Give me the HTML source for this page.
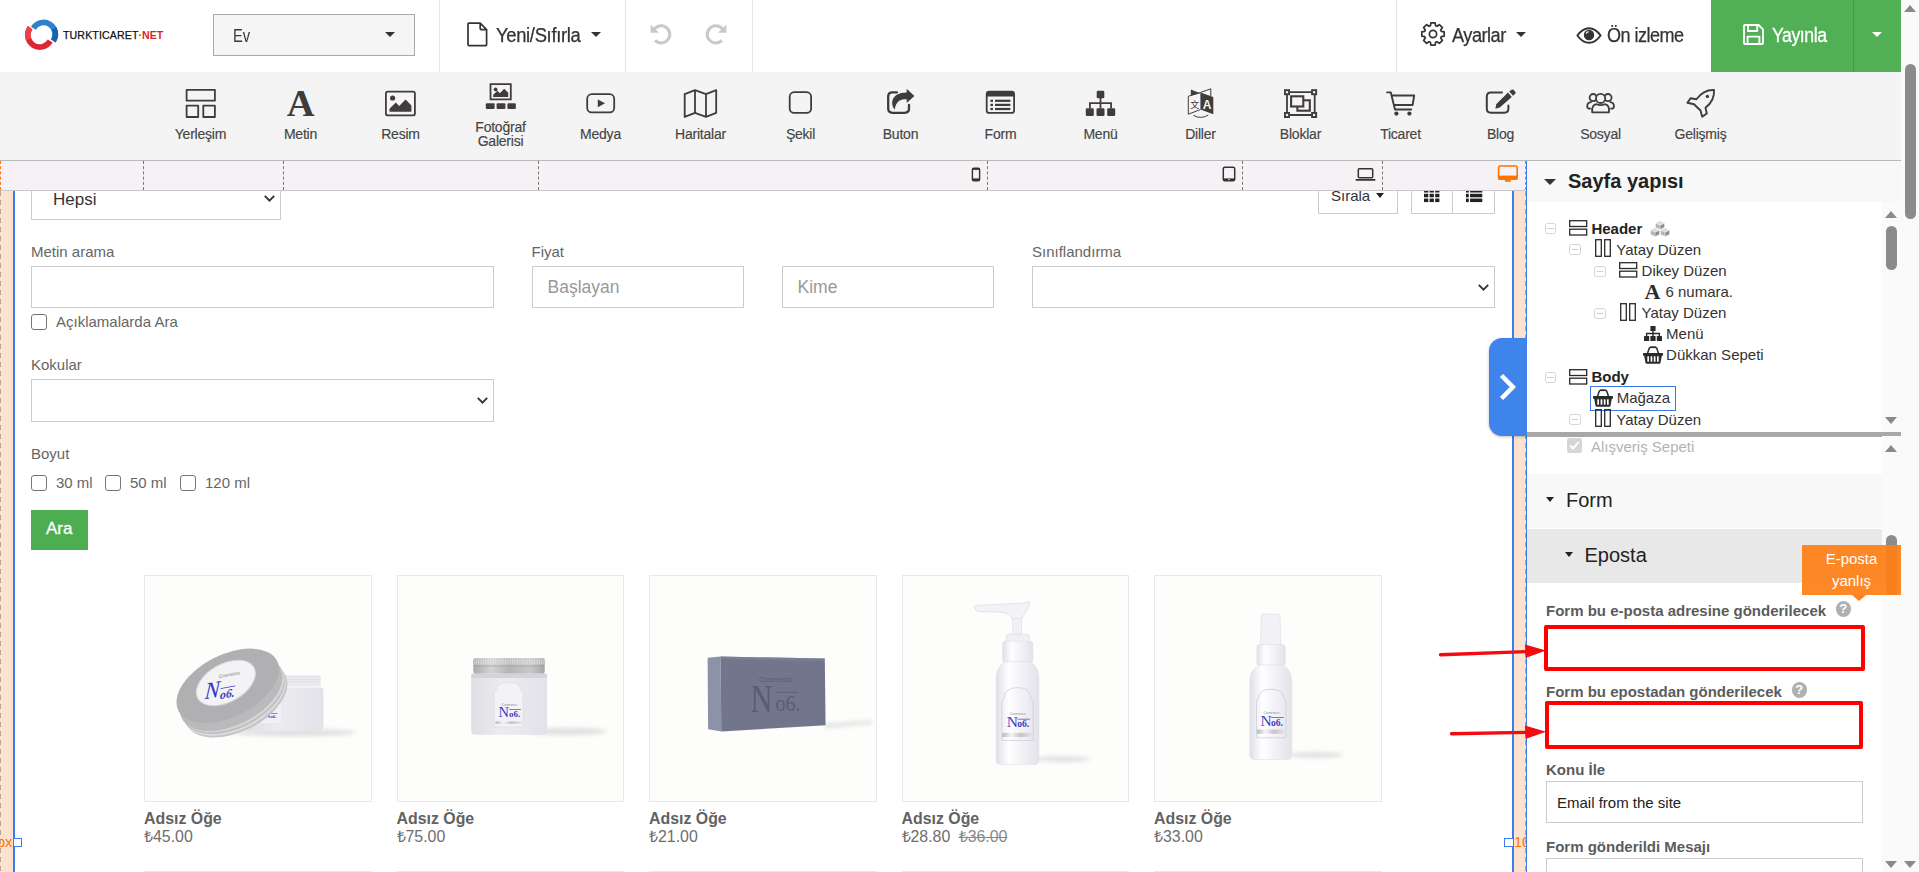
<!DOCTYPE html>
<html lang="tr">
<head>
<meta charset="utf-8">
<title>Site Builder</title>
<style>
*{box-sizing:border-box;margin:0;padding:0}
html,body{width:1919px;height:872px;overflow:hidden;background:#fff;font-family:"Liberation Sans",sans-serif;color:#333}
.abs{position:absolute}
#root{position:relative;width:1919px;height:872px;overflow:hidden}
.t{position:absolute;white-space:nowrap;line-height:1}
/* top bar */
#top{left:0;top:0;width:1901px;height:72px;background:#fff}
.vd{position:absolute;top:0;width:1px;height:72px;background:#e4e4e4}
/* toolbar */
#tool{left:0;top:72px;width:1901px;height:89px;background:#f4f4f4;border-bottom:1px solid #b9b9b9}
.tl{position:absolute;width:121px;text-align:center;font-size:14px;line-height:14px;color:#444;letter-spacing:-.22px;-webkit-text-stroke:.15px #444}
.ti{position:absolute}
/* ruler */
#ruler{left:0;top:161px;width:1527px;height:30px;background:#f5f1f5;border-bottom:1px solid #c8c8c8}
.dash{position:absolute;top:161px;height:29px;width:0;border-left:1px dashed #777}
/* canvas */
#canvas{left:0;top:191px;width:1527px;height:681px;background:#fff;overflow:hidden}
.lbl{position:absolute;font-size:15px;line-height:15px;color:#666;white-space:nowrap}
.box{position:absolute;border:1px solid #ccc;background:#fff}
.cb{position:absolute;width:16px;height:16px;border:1.5px solid #767676;border-radius:3px;background:#fff}
.card{position:absolute;width:227.500px;height:227px;border:1px solid #e8e8ea;background:#fdfdfb;overflow:hidden}
.pt{position:absolute;font-weight:bold;font-size:15.900px;line-height:16px;color:#626262;white-space:nowrap}
.pp{position:absolute;font-size:15.900px;line-height:16px;color:#6e6e6e;white-space:nowrap}
/* right panel */
#rp{left:1527px;top:161px;width:374px;height:711px;background:#fff;overflow:hidden}
.tr{position:absolute;font-size:15px;line-height:16px;color:#333;white-space:nowrap}
.ex{position:absolute;width:11.500px;height:11px;border:1px solid #d4d4d4;border-radius:2.500px;background:#fff}
.ex:after{content:"";position:absolute;left:1.500px;right:1.500px;top:4px;height:1px;background:#cfcfcf}
.fl{position:absolute;font-weight:bold;font-size:15px;line-height:16px;color:#5c5c5c;white-space:nowrap}
.help{position:absolute;width:15.400px;height:15.400px;border-radius:50%;background:#b0b0b0;color:#fff;font-weight:bold;font-size:13px;line-height:16px;text-align:center}
</style>
</head>
<body>
<div id="root">
<div id="top" class="abs">
  <svg class="abs" style="left:22px;top:17px" width="40" height="36" viewBox="22 17 40 36">
    <path d="M33.390 28.220A11.800 11.800 0 1 1 53.280 40.900" fill="none" stroke="#2f80cf" stroke-width="5.600"/>
    <path d="M53.900 28.700A11.800 11.800 0 0 1 53.280 40.900" fill="none" stroke="#1a62ad" stroke-width="5.600"/>
    <path d="M30.220 27.780A12 12 0 1 0 50.190 41" fill="none" stroke="#dd2630" stroke-width="5.600"/>
    <path d="M30.220 27.780A12 12 0 0 0 28.600 39.400" fill="none" stroke="#e8434a" stroke-width="5.600"/>
  </svg>
  <div class="t" style="left:63px;top:29px;font-size:10.6px;line-height:12px;color:#111;letter-spacing:.12px;-webkit-text-stroke:.25px #111">TURKTICARET<span style="color:#e01e26;font-weight:bold;-webkit-text-stroke:0;letter-spacing:0">·NET</span></div>
  <div class="abs" style="left:213px;top:14px;width:202px;height:42px;border:1px solid #a9a9a9;background:#f5f5f5"></div>
  <div class="t" style="left:232.500px;top:26px;font-size:17.500px;line-height:20px;color:#3a3a3a;transform:scaleX(.84);transform-origin:0 0">Ev</div>
  <div class="abs" style="left:385px;top:32px;width:0;height:0;border-left:5px solid transparent;border-right:5px solid transparent;border-top:5.5px solid #333"></div>
  <div class="vd" style="left:439px"></div>
  <div class="vd" style="left:625px"></div>
  <div class="vd" style="left:752px"></div>
  <div class="vd" style="left:1396px"></div>
  <!-- file icon -->
  <svg class="abs" style="left:466px;top:21px" width="23" height="27" viewBox="0 0 23 27"><path d="M2 3.2Q2 2.2 3 2.2H14.2L20.6 8.6V23.4Q20.6 24.6 19.6 24.6H3Q2 24.6 2 23.4Z M14.2 2.2V7.6Q14.2 8.6 15.2 8.6H20.6" fill="none" stroke="#333" stroke-width="1.7" stroke-linejoin="round"/></svg>
  <div class="t" id="yeni" style="-webkit-text-stroke:.25px #333;transform:scaleX(0.945);transform-origin:0 0;left:496px;top:24px;font-size:19.5px;line-height:22px;color:#333;letter-spacing:-.35px">Yeni/Sıfırla</div>
  <div class="abs" style="left:591px;top:32px;width:0;height:0;border-left:5px solid transparent;border-right:5px solid transparent;border-top:5.5px solid #333"></div>
  <!-- undo / redo -->
  <svg class="abs" style="left:649px;top:22.300px" width="24" height="24" viewBox="0 0 24 24"><path d="M4.2 9.2A8.6 8.6 0 1 1 6 18.4" fill="none" stroke="#c9c9c9" stroke-width="3"/><path d="M1.6 2.4V10.8H10Z" fill="#c9c9c9"/></svg>
  <svg class="abs" style="left:704px;top:22.300px" width="24" height="24" viewBox="0 0 24 24"><g transform="translate(24,0) scale(-1,1)"><path d="M4.2 9.2A8.6 8.6 0 1 1 6 18.4" fill="none" stroke="#c9c9c9" stroke-width="3"/><path d="M1.6 2.4V10.8H10Z" fill="#c9c9c9"/></g></svg>
  <!-- gear -->
  <svg class="abs" style="left:1420.200px;top:21.300px" width="26" height="26" viewBox="0 0 26 26"><g fill="none" stroke="#333" stroke-width="1.700" stroke-linejoin="round"><circle cx="13" cy="13" r="3.600"/><path d="M10.43 4.69L10.85 1.81L15.15 1.81L15.57 4.69L17.06 5.30L19.39 3.56L22.44 6.61L20.70 8.94L21.31 10.43L24.19 10.85L24.19 15.15L21.31 15.57L20.70 17.06L22.44 19.39L19.39 22.44L17.06 20.70L15.57 21.31L15.15 24.19L10.85 24.19L10.43 21.31L8.94 20.70L6.61 22.44L3.56 19.39L5.30 17.06L4.69 15.57L1.81 15.15L1.81 10.85L4.69 10.43L5.30 8.94L3.56 6.61L6.61 3.56L8.94 5.30Z"/></g></svg>
  <div class="t" id="ayar" style="-webkit-text-stroke:.25px #333;transform:scaleX(0.934);transform-origin:0 0;left:1452px;top:24px;font-size:19.5px;line-height:22px;color:#333;letter-spacing:-.55px">Ayarlar</div>
  <div class="abs" style="left:1516px;top:32px;width:0;height:0;border-left:5px solid transparent;border-right:5px solid transparent;border-top:5.5px solid #333"></div>
  <!-- eye -->
  <svg class="abs" style="left:1576px;top:26px" width="26" height="19" viewBox="0 0 26 19"><path d="M1.4 9.5Q6.5 2.2 13 2.2T24.600 9.500Q19.500 16.800 13 16.800T1.400 9.500Z" fill="none" stroke="#333" stroke-width="1.9"/><circle cx="13" cy="9" r="5.2" fill="#333"/><path d="M10.2 7.6A3 3 0 0 1 12.6 5.600" stroke="#fff" stroke-width="1.2" fill="none"/></svg>
  <div class="t" id="oniz" style="-webkit-text-stroke:.25px #333;transform:scaleX(0.925);transform-origin:0 0;left:1607px;top:24px;font-size:19.5px;line-height:22px;color:#333;letter-spacing:-.55px">Ön izleme</div>
  <!-- publish -->
  <div class="abs" style="left:1711px;top:0;width:190px;height:72px;background:#51b055"></div>
  <div class="abs" style="left:1853px;top:0;width:1px;height:72px;background:#449a48"></div>
  <svg class="abs" style="left:1742px;top:23px" width="23" height="23" viewBox="0 0 23 23"><path d="M2 3Q2 2 3 2H16.600L21 6.400V20Q21 21 20 21H3Q2 21 2 20Z M6 2V8H15.200V2 M5.600 21V13.600H17.400V21" fill="none" stroke="#fff" stroke-width="1.9" stroke-linejoin="round"/></svg>
  <div class="t" id="yay" style="-webkit-text-stroke:.3px #fff;transform:scaleX(0.908);transform-origin:0 0;left:1772px;top:24px;font-size:19.5px;line-height:22px;color:#fff;letter-spacing:-.5px">Yayınla</div>
  <div class="abs" style="left:1872px;top:32px;width:0;height:0;border-left:5px solid transparent;border-right:5px solid transparent;border-top:5.5px solid #fff"></div>
</div>
<!-- page scrollbar -->
<div class="abs" style="left:1901px;top:0;width:18px;height:872px;background:#fafafa"></div>
<div class="abs" style="left:1904px;top:5px;width:0;height:0;border-left:6.500px solid transparent;border-right:6.500px solid transparent;border-bottom:7px solid #8a8a8a"></div>
<div class="abs" style="left:1905px;top:64px;width:11px;height:154.500px;border-radius:6px;background:#8b8b8b"></div>
<div class="abs" style="left:1904px;top:861px;width:0;height:0;border-left:6.500px solid transparent;border-right:6.500px solid transparent;border-top:7px solid #8a8a8a"></div>

<div id="tool" class="abs">
<!-- all coordinates inside tool are relative to top:72 -->
<svg class="abs" style="left:0;top:0" width="1901" height="88" viewBox="0 72 1901 88">
<g fill="none" stroke="#403c3b" stroke-width="1.8" stroke-linejoin="round" stroke-linecap="round">
  <!-- Yerlesim -->
  <rect x="186.600" y="89.900" width="28.300" height="10.800"/>
  <rect x="186.600" y="105.600" width="11.600" height="11.400"/>
  <rect x="203.300" y="105.600" width="11.600" height="11.400"/>
  <!-- Resim -->
  <rect x="385.900" y="91.600" width="29" height="23.800" rx="2"/>
  <!-- Medya -->
  <rect x="587.200" y="94.200" width="27" height="18.200" rx="4.500"/>
  <!-- Haritalar -->
  <path d="M684.700 94.200L695 90.200L706 94.200L716.200 90.200V112.800L706 116.800L695 112.800L684.700 116.800Z M695 90.200V112.800 M706 94.200V116.800"/>
  <!-- Sekil -->
  <rect x="789.700" y="92.200" width="21.400" height="20.700" rx="4.500"/>
  <!-- Buton box -->
  <path d="M897 92.300H892.400Q888.200 92.300 888.200 96.500V108.600Q888.200 112.800 892.400 112.800H904.800Q909 112.800 909 108.600V105" stroke-width="2.300"/>
  <!-- Form -->
  <rect x="986.700" y="91.700" width="27.400" height="21.200" rx="2.500"/>
  <!-- Bloklar -->
  <rect x="1287" y="92.100" width="27.700" height="22.900"/>
  <rect x="1297.400" y="100.300" width="12.400" height="10.400" stroke-width="2.100" stroke-linejoin="miter"/>
  <rect x="1291.100" y="96.300" width="12.200" height="10.200" stroke-width="2.100" fill="#f4f4f4" stroke-linejoin="miter"/>
  <!-- Ticaret -->
  <path d="M1387.200 92.400H1390.800L1395 109.500H1411.200 M1391.800 95.500H1414.200L1412.600 105H1394" stroke-width="1.900"/>
  <!-- Blog -->
  <path d="M1502 92.600H1491Q1486.800 92.600 1486.800 96.800V108.600Q1486.800 112.800 1491 112.800H1504.200Q1508.400 112.800 1508.400 108.600V105.500" stroke-width="2"/>
  <!-- Sosyal -->
  <circle cx="1593.200" cy="97.600" r="3.600"/><circle cx="1608" cy="97.600" r="3.600"/>
  <path d="M1591 102.200Q1587.200 102.600 1587.200 106.400Q1587.200 108.600 1590.200 108.600 M1610.200 102.200Q1614 102.600 1614 106.400Q1614 108.600 1611 108.600"/>
  <circle cx="1600.600" cy="98.400" r="4.600" fill="#f4f4f4"/>
  <path d="M1592.200 112.400H1609Q1609.800 104.800 1604.600 104.200Q1600.600 106 1596.600 104.200Q1591.400 104.800 1592.200 112.400Z" fill="#f4f4f4"/>
  <!-- Gelismis rocket -->
  <path d="M1714 90C1714.500 97 1711 103.500 1705.500 107.800L1706.800 113.500L1702.200 116.800L1700.500 110.500L1694 104.200L1687.400 102.800L1690.600 98.200L1696.400 99.200C1700.600 93.600 1707 89.600 1714 90Z" stroke-width="1.900"/>
</g>
<g fill="#403c3b" stroke="none">
  <!-- Resim fill -->
  <circle cx="392.600" cy="98" r="2.600"/>
  <path d="M389.500 111.800V108.800L395.800 102.600L399.200 106L405.600 99.600L411.400 105.400V111.800Z"/>
  <!-- Galeri -->
  <path d="M489.600 83.300H511.700V100.300H489.600Z M491.400 85.100V98.500H509.900V85.100Z" fill-rule="evenodd"/>
  <circle cx="495.600" cy="89.400" r="1.900"/>
  <path d="M493.200 96.900V94.800L497.400 90.800L499.800 93.200L504.200 88.800L508.200 92.800V96.900Z"/>
  <rect x="485.800" y="103.300" width="8.800" height="5.700" rx="1"/><rect x="496.600" y="103.300" width="8.800" height="5.700" rx="1"/><rect x="507.400" y="103.300" width="8.400" height="5.700" rx="1"/>
  <!-- Medya play -->
  <path d="M597.800 99.400L605 103.300L597.800 107.200Z"/>
  <!-- Buton arrow -->
  <path d="M906.700 88.800L914.400 95.900L906.700 103V99.300C900.500 99.300 896 100.800 894.800 109.600C890.300 104.500 890.300 92.800 906.700 92.500Z"/>
  <!-- Form fill -->
  <path d="M986.700 93.700Q986.700 91.200 989.200 91.200H1011.600Q1014.100 91.200 1014.100 93.700V96.400H986.700Z"/>
  <rect x="990.400" y="99.700" width="2.600" height="2.200"/><rect x="995" y="99.700" width="15.400" height="2.200"/>
  <rect x="990.400" y="103.800" width="2.600" height="2.200"/><rect x="995" y="103.800" width="15.400" height="2.200"/>
  <rect x="990.400" y="107.900" width="2.600" height="2.200"/><rect x="995" y="107.900" width="15.400" height="2.200"/>
  <!-- Menu sitemap -->
  <rect x="1096.700" y="90.800" width="7.600" height="7.400" rx="1.200"/>
  <rect x="1085.800" y="108.200" width="8" height="7.800" rx="1.200"/><rect x="1096.500" y="108.200" width="8" height="7.800" rx="1.200"/><rect x="1107.200" y="108.200" width="8" height="7.800" rx="1.200"/>
  <path d="M1099.600 98H1101.400V102.200H1112V108.400H1110.200V104H1101.400V108.400H1099.600V104H1090.800V108.400H1089V102.200H1099.600Z"/>
  <!-- Diller -->
  <path d="M1200.400 92.500L1213.300 97.100V114.200L1200.400 109.600Z"/><path d="M1190.800 89.600L1200.200 93.300L1190.800 95.700Z"/>
  <!-- Bloklar handles -->
  <rect x="1284" y="89.200" width="6" height="6"/><rect x="1311.100" y="89.200" width="6" height="6"/><rect x="1284" y="112" width="6" height="6"/><rect x="1311.100" y="112" width="6" height="6"/>
  <!-- Ticaret wheels -->
  <circle cx="1396.400" cy="113.600" r="2.100"/><circle cx="1409.400" cy="113.600" r="2.100"/>
  <!-- Blog pencil -->
  <path d="M1509.200 91.400L1512 89.600Q1513 89.200 1513.800 90L1515.400 92Q1516 93 1515.200 93.800L1513 95.800Z M1508 92.600L1511.800 97L1499.800 107.600L1495.400 108.800L1496.200 104.200Z"/>
  <!-- rocket window -->
  <circle cx="1707.400" cy="96.400" r="1.700"/>
</g>
<g fill="#f4f4f4" stroke="none">
  <rect x="1285.900" y="91.100" width="2.200" height="2.200"/><rect x="1313" y="91.100" width="2.200" height="2.200"/><rect x="1285.900" y="113.900" width="2.200" height="2.200"/><rect x="1313" y="113.900" width="2.200" height="2.200"/>
</g>
<!-- Diller left page -->
<path d="M1200.400 92.500L1188.300 96.300V114.200L1200.400 109.600 M1200.400 92.500L1210.800 88.800V96 M1193.300 115.400Q1200.800 119.600 1208.300 115" fill="none" stroke="#403c3b" stroke-width="1"/>
<text x="1207.100" y="108.800" font-family="Liberation Sans, sans-serif" font-weight="bold" font-size="12" fill="#f4f4f4" text-anchor="middle">A</text>
<text x="1194.800" y="107.600" font-family="Liberation Sans, Noto Sans CJK SC, sans-serif" font-size="9" fill="#403c3b" text-anchor="middle">文</text>
<text x="300.600" y="116.200" font-family="Liberation Serif, serif" font-weight="bold" font-size="38.500" fill="#403c3b" text-anchor="middle">A</text>
</svg>
<div class="tl" style="left:140px;top:55px">Yerleşim</div>
<div class="tl" style="left:240px;top:55px">Metin</div>
<div class="tl" style="left:340px;top:55px">Resim</div>
<div class="tl" style="left:440px;top:49px;line-height:13.500px">Fotoğraf<br>Galerisi</div>
<div class="tl" style="left:540px;top:55px">Medya</div>
<div class="tl" style="left:640px;top:55px">Haritalar</div>
<div class="tl" style="left:740px;top:55px">Şekil</div>
<div class="tl" style="left:840px;top:55px">Buton</div>
<div class="tl" style="left:940px;top:55px">Form</div>
<div class="tl" style="left:1040px;top:55px">Menü</div>
<div class="tl" style="left:1140px;top:55px">Diller</div>
<div class="tl" style="left:1240px;top:55px">Bloklar</div>
<div class="tl" style="left:1340px;top:55px">Ticaret</div>
<div class="tl" style="left:1440px;top:55px">Blog</div>
<div class="tl" style="left:1540px;top:55px">Sosyal</div>
<div class="tl" style="left:1640px;top:55px">Gelişmiş</div>
</div>

<div id="ruler" class="abs" style="width:1525px"></div>
<div class="dash" style="left:143px"></div>
<div class="dash" style="left:283px"></div>
<div class="dash" style="left:538px"></div>
<div class="dash" style="left:987px"></div>
<div class="dash" style="left:1242px"></div>
<div class="dash" style="left:1382px"></div>
<div class="abs" style="left:0;top:161px;width:0;height:29px;border-left:1px dashed #ff7a0d"></div>
<div class="abs" style="left:1525px;top:161px;width:0;height:29px;border-left:1px dashed #ff7a0d"></div>
<!-- device icons -->
<svg class="abs" style="left:971px;top:167px" width="10" height="15" viewBox="0 0 10 15"><rect x="1.400" y="1.300" width="7.200" height="12.400" rx="1.300" fill="none" stroke="#333" stroke-width="1.400"/><rect x="1.400" y="1.300" width="7.200" height="1.600" fill="#333"/><rect x="1.400" y="11.400" width="7.200" height="2.300" fill="#333"/></svg>
<svg class="abs" style="left:1222px;top:166px" width="14" height="16" viewBox="0 0 14 16"><rect x="1.300" y="1.200" width="11.400" height="13.600" rx="1.600" fill="none" stroke="#333" stroke-width="1.500"/><rect x="1.300" y="12.400" width="11.400" height="2.400" fill="#333"/><circle cx="7" cy="13.500" r=".7" fill="#fff"/></svg>
<svg class="abs" style="left:1355px;top:167px" width="21" height="15" viewBox="0 0 21 15"><rect x="3.300" y="1.800" width="14.400" height="9" rx="1" fill="none" stroke="#333" stroke-width="1.500"/><rect x="0.500" y="12" width="20" height="1.700" rx=".8" fill="#333"/></svg>
<svg class="abs" style="left:1497px;top:165px" width="22" height="18" viewBox="0 0 22 18"><rect x="1.600" y="1" width="18.600" height="13.200" rx="1.800" fill="none" stroke="#ff7300" stroke-width="1.600"/><rect x="1.600" y="10.600" width="18.600" height="3.600" fill="#ff7300"/><path d="M8.400 14.200H13.400L14 16.800H7.800Z" fill="#ff7300"/></svg>
<div class="abs" style="left:1526px;top:161px;width:1px;height:30px;background:#3b7cf0"></div>

<div id="canvas" class="abs">
 <!-- coords relative to top:191 ; subtract 191 from page y -->
 <div class="abs" style="left:0;top:0;width:13px;height:681px;background:#fde3cf"></div>
 <div class="abs" style="left:0;top:0;width:1px;height:681px;background:repeating-linear-gradient(#b7a595 0 5px,transparent 5px 9px)"></div>
 <div class="abs" style="left:13px;top:0;width:2px;height:681px;background:#3b7cf0"></div>
 <div class="abs" style="left:1512px;top:0;width:2px;height:681px;background:#3b7cf0"></div>
 <div class="abs" style="left:1514px;top:0;width:12px;height:681px;background:#fde3cf"></div>
 <div class="abs" style="left:1525px;top:0;width:1px;height:681px;background:repeating-linear-gradient(#b7a595 0 5px,transparent 5px 9px)"></div>
 
 <!-- Hepsi select -->
 <div class="box" style="left:31px;top:-20px;width:250px;height:49px"></div>
 <div class="t" id="hepsi" style="left:53px;top:-.5px;font-size:17px;line-height:18px;color:#333">Hepsi</div>
 <svg class="abs" style="left:263px;top:3px" width="13" height="9" viewBox="0 0 13 9"><path d="M1.800 1.800L6.500 6.600L11.200 1.800" fill="none" stroke="#333" stroke-width="1.900"/></svg>
 <!-- Sirala -->
 <div class="box" style="left:1318px;top:-20px;width:80px;height:43px"></div>
 <div class="t" id="sirala" style="left:1331px;top:-3.500px;font-size:15px;line-height:16px;color:#333">Sırala</div>
 <div class="abs" style="left:1375.500px;top:2px;width:0;height:0;border-left:4.800px solid transparent;border-right:4.800px solid transparent;border-top:5.500px solid #222"></div>
 <div class="box" style="left:1411px;top:-20px;width:84px;height:43px"></div>
 <div class="abs" style="left:1452px;top:-20px;width:1px;height:42px;background:#ccc"></div>
 <svg class="abs" style="left:1424px;top:-2.500px" width="16.500" height="14" viewBox="0 0 15.400 12" preserveAspectRatio="none"><g fill="#222"><rect x="0" y="0" width="4" height="3"/><rect x="5.200" y="0" width="4" height="3"/><rect x="10.400" y="0" width="4" height="3"/><rect x="0" y="4.100" width="4" height="3"/><rect x="5.200" y="4.100" width="4" height="3"/><rect x="10.400" y="4.100" width="4" height="3"/><rect x="0" y="8.200" width="4" height="3"/><rect x="5.200" y="8.200" width="4" height="3"/><rect x="10.400" y="8.200" width="4" height="3"/></g></svg>
 <svg class="abs" style="left:1466px;top:-2.500px" width="16.500" height="14" viewBox="0 0 15.400 12" preserveAspectRatio="none"><g fill="#222"><rect x="0" y="0" width="2.600" height="3"/><rect x="3.800" y="0" width="11.400" height="3"/><rect x="0" y="4.100" width="2.600" height="3"/><rect x="3.800" y="4.100" width="11.400" height="3"/><rect x="0" y="8.200" width="2.600" height="3"/><rect x="3.800" y="8.200" width="11.400" height="3"/></g></svg>
 <!-- row 1 -->
 <div class="lbl" id="l1" style="left:31px;top:53px">Metin arama</div>
 <div class="box" style="left:31px;top:75px;width:463px;height:42px"></div>
 <div class="lbl" style="left:531.500px;top:53px">Fiyat</div>
 <div class="box" style="left:532px;top:75px;width:212px;height:42px"></div>
 <div class="t" style="left:547.500px;top:87px;font-size:17.500px;line-height:18px;color:#999">Başlayan</div>
 <div class="box" style="left:782px;top:75px;width:212px;height:42px"></div>
 <div class="t" style="left:797.500px;top:87px;font-size:17.500px;line-height:18px;color:#999">Kime</div>
 <div class="lbl" style="left:1032px;top:53px">Sınıflandırma</div>
 <div class="box" style="left:1032px;top:75px;width:463px;height:42px"></div>
 <svg class="abs" style="left:1477px;top:92px" width="13" height="9" viewBox="0 0 13 9"><path d="M1.800 1.800L6.500 6.600L11.200 1.800" fill="none" stroke="#333" stroke-width="1.900"/></svg>
 <div class="cb" style="left:31px;top:123px"></div>
 <div class="lbl" style="left:56px;top:123px">Açıklamalarda Ara</div>
 <!-- Kokular -->
 <div class="lbl" style="left:31px;top:166px">Kokular</div>
 <div class="box" style="left:31px;top:188px;width:463px;height:43px"></div>
 <svg class="abs" style="left:476px;top:205px" width="13" height="9" viewBox="0 0 13 9"><path d="M1.800 1.800L6.500 6.600L11.200 1.800" fill="none" stroke="#333" stroke-width="1.900"/></svg>
 <!-- Boyut -->
 <div class="lbl" style="left:31px;top:255px">Boyut</div>
 <div class="cb" style="left:31px;top:284px"></div><div class="lbl" style="left:56px;top:284px">30 ml</div>
 <div class="cb" style="left:105px;top:284px"></div><div class="lbl" style="left:130px;top:284px">50 ml</div>
 <div class="cb" style="left:180px;top:284px"></div><div class="lbl" style="left:205px;top:284px">120 ml</div>
 <div class="abs" style="left:31px;top:319px;width:57px;height:40px;background:#4cae50"></div>
 <div class="t" style="left:46px;top:329px;font-size:17px;line-height:18px;color:#fff;-webkit-text-stroke:.3px #fff">Ara</div>
  <svg width="0" height="0" style="position:absolute"><defs>
<linearGradient id="gSh" x1="0" x2="1"><stop offset="0" stop-color="#8a8a90" stop-opacity=".55"/><stop offset=".5" stop-color="#aaaab0" stop-opacity=".25"/><stop offset="1" stop-color="#c8c8cc" stop-opacity="0"/></linearGradient>
<linearGradient id="gBody" x1="0" x2="1"><stop offset="0" stop-color="#dfdfe6"/><stop offset=".18" stop-color="#f3f3f7"/><stop offset=".3" stop-color="#ffffff"/><stop offset=".55" stop-color="#f4f4f8"/><stop offset="1" stop-color="#e2e2e9"/></linearGradient>
<linearGradient id="gJar" x1="0" x2="1"><stop offset="0" stop-color="#dedee4"/><stop offset=".4" stop-color="#ebebf0"/><stop offset="1" stop-color="#e2e2e8"/></linearGradient>
<linearGradient id="gCap" x1="0" x2="1"><stop offset="0" stop-color="#a9a9ab"/><stop offset=".25" stop-color="#d4d4d6"/><stop offset=".5" stop-color="#b4b4b6"/><stop offset=".8" stop-color="#c9c9cb"/><stop offset="1" stop-color="#a6a6a8"/></linearGradient>
<linearGradient id="gBand" x1="0" x2="1"><stop offset="0" stop-color="#b8b8bc"/><stop offset=".3" stop-color="#f4f4f6"/><stop offset=".6" stop-color="#c6c6ca"/><stop offset="1" stop-color="#e6e6ea"/></linearGradient>
<linearGradient id="gRim" x1="0" x2="1"><stop offset="0" stop-color="#d6d6d8"/><stop offset=".5" stop-color="#c2c2c4"/><stop offset="1" stop-color="#b2b2b4"/></linearGradient>
<filter id="bl" x="-20%" y="-100%" width="140%" height="300%"><feGaussianBlur stdDeviation="2.2"/></filter>
</defs></svg>
 <div class="card" style="left:144px;top:384px"><svg class="abs" style="left:-1px;top:-1px" width="228" height="227" viewBox="0 0 228 227"><ellipse cx="150" cy="157.500" rx="62" ry="3.600" fill="#9a9aa0" opacity=".3" filter="url(#bl)"/>
<path d="M139.700 100.200H176.600V111.500H139.700Z" fill="#ebebef"/><path d="M139.700 101.800H176.600M139.700 104.400H176.600M139.700 107H176.600" stroke="#dcdce2" stroke-width=".7"/>
<path d="M102 112.400H176.400Q179.400 112.400 179.400 115.400V150.800Q179.400 155.800 174.400 155.800H102Z" fill="url(#gJar)"/>
<rect x="117" y="123.700" width="21" height="25" rx="1" fill="#f1f1f5" stroke="#dedee4" stroke-width=".5"/>
<text x="120.300" y="143" font-family="Liberation Serif, serif" font-size="8.500" fill="#3a3fc4">N</text><text x="126.300" y="143" font-family="Liberation Serif, serif" font-size="5" font-weight="bold" fill="#3a3fc4">o6.</text><rect x="126.500" y="138.300" width="7" height=".6" fill="#3a3fc4"/>
<g transform="rotate(-26.700 88 118)"><ellipse cx="88.500" cy="126" rx="55.300" ry="31.500" fill="#c4c4c6"/><ellipse cx="88" cy="124" rx="55.300" ry="31.500" fill="#dcdcde"/><ellipse cx="88" cy="122" rx="55.300" ry="31.500" fill="#c0c0c2"/><ellipse cx="88" cy="120" rx="55.300" ry="31.500" fill="#d6d6d8"/><ellipse cx="87" cy="118" rx="55.300" ry="31.500" fill="#bababc"/></g>
<g transform="rotate(-26.700 83.800 110.800)"><ellipse cx="83.800" cy="110.800" rx="55.300" ry="31" fill="#b0b0b2"/></g>
<g transform="rotate(-29 81.900 107.900)"><ellipse cx="81.900" cy="107.900" rx="32" ry="19" fill="#f3f3f6" stroke="#d8d8dc" stroke-width="1"/></g>
<g transform="rotate(-10 84 110) skewX(-14)"><text x="88" y="120" font-family="Liberation Serif, serif" font-style="italic" font-size="23" fill="#3338c8">N</text><text x="104" y="122.500" font-family="Liberation Serif, serif" font-style="italic" font-weight="bold" font-size="12" fill="#3338c8">o6.</text><rect x="104" y="111.800" width="15" height=".8" fill="#3338c8"/><text x="112" y="101.500" font-family="Liberation Sans, sans-serif" font-size="4.600" fill="#77777f" text-anchor="middle">Cosmetics</text></g></svg></div>
 <div class="pt" id="pt0" style="left:144px;top:619.500px">Adsız Öğe</div>
 <div class="pp" id="pp0" style="left:144px;top:638px">₺45.00</div>
 <div class="card" style="left:396.5px;top:384px"><svg class="abs" style="left:-1px;top:-1px" width="228" height="227" viewBox="0 0 228 227"><ellipse cx="170" cy="156.500" rx="40" ry="3.400" fill="#9a9aa0" opacity=".3" filter="url(#bl)"/>
<rect x="74.200" y="98.600" width="75.900" height="61.200" rx="3.500" fill="url(#gJar)"/>
<rect x="74.200" y="98.600" width="75.900" height="4.400" rx="1.500" fill="#d3d3da"/>
<rect x="76.300" y="83.200" width="71.400" height="15.200" rx="1.800" fill="url(#gCap)"/>
<path d="M78.0 84.200V89.600M79.7 84.200V89.600M81.4 84.200V89.600M83.1 84.200V89.600M84.8 84.200V89.600M86.5 84.200V89.600M88.2 84.200V89.600M89.9 84.200V89.600M91.6 84.200V89.600M93.3 84.200V89.600M95.0 84.200V89.600M96.7 84.200V89.600M98.4 84.200V89.600M100.1 84.200V89.600M101.8 84.200V89.600M103.5 84.200V89.600M105.2 84.200V89.600M106.9 84.200V89.600M108.6 84.200V89.600M110.3 84.200V89.600M112.0 84.200V89.600M113.7 84.200V89.600M115.4 84.200V89.600M117.1 84.200V89.600M118.8 84.200V89.600M120.5 84.200V89.600M122.2 84.200V89.600M123.9 84.200V89.600M125.6 84.200V89.600M127.3 84.200V89.600M129.0 84.200V89.600M130.7 84.200V89.600M132.4 84.200V89.600M134.1 84.200V89.600M135.8 84.200V89.600M137.5 84.200V89.600M139.2 84.200V89.600M140.9 84.200V89.600M142.6 84.200V89.600M144.3 84.200V89.600M146.0 84.200V89.600" stroke="#e9e9eb" stroke-width=".7"/>
<rect x="76.300" y="90.400" width="71.400" height="1" fill="#9b9b9d" opacity=".6"/>
<path d="M97.100 151.800V118Q97.100 115.800 99.300 115.800Q99.300 107.600 111.500 107.600Q123.800 107.600 123.800 115.800Q126 115.800 126 118V151.800Z" fill="#f3f3f7" stroke="#dadae2" stroke-width=".6"/>
<rect x="98.500" y="146.200" width="26.200" height="2.800" fill="url(#gBand)"/>
<text x="101.5" y="142.1" font-family="Liberation Serif, serif" font-size="14.5" fill="#3a3fc4">N</text><text x="112.0" y="142.1" font-family="Liberation Serif, serif" font-size="9.0" font-weight="bold" fill="#3a3fc4">o6.</text><rect x="112.3" y="134.1" width="11.6" height=".7" fill="#3a3fc4"/><text x="112.5" y="130.8" font-family="Liberation Sans, sans-serif" font-size="3.4" fill="#8a8a94" text-anchor="middle">Cosmetics</text></svg></div>
 <div class="pt" id="pt1" style="left:396.5px;top:619.500px">Adsız Öğe</div>
 <div class="pp" id="pp1" style="left:396.5px;top:638px">₺75.00</div>
 <div class="card" style="left:649px;top:384px"><svg class="abs" style="left:-1px;top:-1px" width="228" height="227" viewBox="0 0 228 227"><path d="M176 149L222 145.500L224 148.500L176 153.500Z" fill="#9a9aa0" opacity=".3" filter="url(#bl)"/>
<path d="M58.600 82.700L71.500 81.600L72.300 156.600L59.100 154.200Z" fill="#8d92a8"/>
<path d="M71.500 81.600L175.800 83.500L176.600 150.200L72.300 156.600Z" fill="#72768c"/>
<path d="M71.500 81.600L175.800 83.500L175.900 86L71.600 84.200Z" fill="#80859b" opacity=".6"/>
<text x="126.800" y="106.600" font-family="Liberation Sans, sans-serif" font-size="7.200" fill="#595d73" text-anchor="middle">Cosmetics</text>
<text transform="translate(101.500 137.300) scale(.78 1)" font-family="Liberation Serif, serif" font-size="39" fill="#595d73">N</text>
<text x="126.500" y="135.800" font-family="Liberation Serif, serif" font-size="23" fill="#595d73" textLength="25" lengthAdjust="spacingAndGlyphs">o6.</text>
<rect x="126.800" y="116.900" width="21.500" height=".8" fill="#595d73"/></svg></div>
 <div class="pt" id="pt2" style="left:649px;top:619.500px">Adsız Öğe</div>
 <div class="pp" id="pp2" style="left:649px;top:638px">₺21.00</div>
 <div class="card" style="left:901.5px;top:384px"><svg class="abs" style="left:-1px;top:-1px" width="228" height="227" viewBox="0 0 228 227"><ellipse cx="160" cy="184" rx="28" ry="2.800" fill="#9a9aa0" opacity=".3" filter="url(#bl)"/>
<path d="M72.400 32.400Q72.400 30.600 75 30.400L120.500 28.200Q125 27.800 127.500 26.600Q128.200 30 125.200 34.500Q121 40 119.400 44.400H110.700Q108 38 98 37L76.500 36.600Q73 35.800 72.400 32.400Z" fill="#f3f3f7" stroke="#dcdce3" stroke-width=".8"/>
<rect x="110.700" y="43.500" width="8.700" height="16.500" fill="#f1f1f5" stroke="#dcdce3" stroke-width=".6"/>
<rect x="104.200" y="59.200" width="23.300" height="8.500" rx="2" fill="#f0f0f4" stroke="#dcdce3" stroke-width=".6"/>
<rect x="100.700" y="66.200" width="30.100" height="21" rx="2.500" fill="url(#gBody)" stroke="#dedee5" stroke-width=".6"/>
<path d="M103.500 86.600H128Q136.900 92 136.900 103V185.400Q136.900 189.400 132.900 189.400H98.200Q94.200 189.400 94.200 185.400V103Q94.200 92 103.500 86.600Z" fill="url(#gBody)" stroke="#dedee5" stroke-width=".6"/>
<path d="M99.800 165.400V126.500Q99.800 124.500 101.800 124.500Q101.800 112.600 115.500 112.600Q129.200 112.600 129.200 124.500Q131.200 124.500 131.200 126.500V165.400Z" fill="none" stroke="#c9c9d2" stroke-width=".7"/>
<rect x="100.300" y="157.800" width="30.400" height="4.300" fill="url(#gBand)"/>
<text x="104.7" y="152.3" font-family="Liberation Serif, serif" font-size="15.5" fill="#3a3fc4">N</text><text x="115.2" y="152.3" font-family="Liberation Serif, serif" font-size="9.6" font-weight="bold" fill="#3a3fc4">o6.</text><rect x="115.5" y="143.8" width="12.4" height=".7" fill="#3a3fc4"/><text x="115.7" y="140.2" font-family="Liberation Sans, sans-serif" font-size="3.4" fill="#8a8a94" text-anchor="middle">Cosmetics</text></svg></div>
 <div class="pt" id="pt3" style="left:901.5px;top:619.500px">Adsız Öğe</div>
 <div class="pp" id="pp3" style="left:901.5px;top:638px">₺28.80 <span id="old3" style="color:#8a8a8a;text-decoration:line-through;margin-left:4px">₺36.00</span></div>
 <div class="card" style="left:1154px;top:384px"><svg class="abs" style="left:-1px;top:-1px" width="228" height="227" viewBox="0 0 228 227"><ellipse cx="162" cy="180" rx="28" ry="2.800" fill="#9a9aa0" opacity=".3" filter="url(#bl)"/>
<path d="M107.400 41Q107.400 39 109.400 39H124Q126 39 126 41L126.900 69.500H106.400Z" fill="#f2f2f6" stroke="#dfdfe6" stroke-width=".7"/>
<rect x="102.900" y="69.500" width="28.300" height="21" rx="2.500" fill="url(#gBody)" stroke="#dedee5" stroke-width=".6"/>
<path d="M105.500 90H128.600Q137.700 95 137.700 106V180.600Q137.700 184.600 133.700 184.600H99.900Q95.900 184.600 95.900 180.600V106Q95.900 95 105.500 90Z" fill="url(#gBody)" stroke="#dedee5" stroke-width=".6"/>
<path d="M102.400 162.800V126Q102.400 124 104.400 124Q104.400 114.200 117.100 114.200Q129.900 114.200 129.900 124Q131.900 124 131.900 126V162.800Z" fill="none" stroke="#c9c9d2" stroke-width=".7"/>
<rect x="102.900" y="154.500" width="28.500" height="4.300" fill="url(#gBand)"/>
<text x="106.5" y="150.6" font-family="Liberation Serif, serif" font-size="15.5" fill="#3a3fc4">N</text><text x="117.0" y="150.6" font-family="Liberation Serif, serif" font-size="9.6" font-weight="bold" fill="#3a3fc4">o6.</text><rect x="117.3" y="142.1" width="12.4" height=".7" fill="#3a3fc4"/><text x="117.5" y="138.5" font-family="Liberation Sans, sans-serif" font-size="3.4" fill="#8a8a94" text-anchor="middle">Cosmetics</text></svg></div>
 <div class="pt" id="pt4" style="left:1154px;top:619.500px">Adsız Öğe</div>
 <div class="pp" id="pp4" style="left:1154px;top:638px">₺33.00</div>
 <div class="card" style="left:144px;top:680px;height:20px"></div>
 <div class="card" style="left:396.5px;top:680px;height:20px"></div>
 <div class="card" style="left:649px;top:680px;height:20px"></div>
 <div class="card" style="left:901.5px;top:680px;height:20px"></div>
 <div class="card" style="left:1154px;top:680px;height:20px"></div>

 <!-- handles -->
 <div class="t" style="left:-3px;top:643.800px;font-size:14.500px;line-height:14px;color:#ff7300">px</div>
 <div class="abs" style="left:13px;top:647px;width:9px;height:9px;border:1px solid #3b7cf0;background:#fff"></div>
 <div class="abs" style="left:1504px;top:647px;width:9.500px;height:9px;border:1px solid #3b7cf0;background:#fff"></div>
 <div class="t" style="left:1514px;top:643.800px;font-size:14.500px;line-height:14px;color:#ff7300">10</div>
 <div class="abs" style="left:1526px;top:0;width:1px;height:681px;background:#3b7cf0"></div>
 <!-- blue tab -->
 <div class="abs" style="left:1489px;top:147px;width:38px;height:98px;background:#3f84ea;border-radius:13px 0 0 13px;box-shadow:0 1px 3px rgba(0,0,0,.25)"></div>
 <svg class="abs" style="left:1497px;top:181px" width="22" height="30" viewBox="0 0 22 30"><path d="M4.500 3.500L15.800 15L4.500 26.500" fill="none" stroke="#fff" stroke-width="4.600"/></svg>
</div>

<div id="rp" class="abs">
 <!-- coords relative to left:1527 top:161 -->
 <div class="abs" style="left:0;top:0;width:374px;height:40.700px;background:#f8f8f8"></div>
 <div class="abs" style="left:17px;top:17.500px;width:0;height:0;border-left:6px solid transparent;border-right:6px solid transparent;border-top:6.500px solid #333"></div>
 <div class="t" id="sayfa" style="left:41px;top:9px;font-size:20px;line-height:22px;font-weight:bold;color:#222">Sayfa yapısı</div>
 <!-- tree scrollbar strip -->
 <div class="abs" style="left:355px;top:40.700px;width:19px;height:232px;background:#fafafa"></div>
 <div class="abs" style="left:358px;top:49.700px;width:0;height:0;border-left:6.500px solid transparent;border-right:6.500px solid transparent;border-bottom:7px solid #8a8a8a"></div>
 <div class="abs" style="left:359px;top:65px;width:11px;height:44px;border-radius:6px;background:#8b8b8b"></div>
 <div class="abs" style="left:358px;top:256px;width:0;height:0;border-left:6.500px solid transparent;border-right:6.500px solid transparent;border-top:7px solid #8a8a8a"></div>
  <div class="ex" style="left:17.5px;top:62.2px"></div>
 <svg class="abs" style="left:41.6px;top:58.6px" width="19" height="16" viewBox="0 0 19 16"><rect x=".7" y=".7" width="17" height="5.800" fill="none" stroke="#2a2a2a" stroke-width="1.300"/><rect x=".7" y="9.200" width="17" height="5.800" fill="none" stroke="#2a2a2a" stroke-width="1.300"/></svg>
 <div class="tr" id=t1 style="left:64.4px;top:59.5px;font-weight:bold;color:#222">Header</div>
 <svg class="abs" style="left:123px;top:60px" width="20" height="16" viewBox="0 0 20 16"><g stroke="#fff" stroke-width=".5"><path d="M10 0L14.500 2V6.500L10 8.500L5.500 6.500V2Z" fill="#b4b4b4"/><path d="M10 4L14.500 2V6.500L10 8.500Z" fill="#8e8e8e"/><path d="M10 4L5.500 2L10 0L14.500 2Z" fill="#dadada"/><path d="M5 7L9.500 9V13.500L5 15.500L.5 13.500V9Z" fill="#b4b4b4"/><path d="M5 11L9.500 9V13.500L5 15.500Z" fill="#8e8e8e"/><path d="M5 11L.5 9L5 7L9.500 9Z" fill="#dadada"/><path d="M15 7L19.500 9V13.500L15 15.500L10.500 13.500V9Z" fill="#b4b4b4"/><path d="M15 11L19.500 9V13.500L15 15.500Z" fill="#8e8e8e"/><path d="M15 11L10.500 9L15 7L19.500 9Z" fill="#dadada"/></g></svg>
 <div class="ex" style="left:42.3px;top:83px"></div>
 <svg class="abs" style="left:67.7px;top:78.1px" width="17" height="19" viewBox="0 0 17 19"><rect x=".7" y=".7" width="5.600" height="16.600" fill="none" stroke="#2a2a2a" stroke-width="1.300"/><rect x="9.700" y=".7" width="5.600" height="16.600" fill="none" stroke="#2a2a2a" stroke-width="1.300"/></svg>
 <div class="tr" id=t2 style="left:89.3px;top:80.6px">Yatay Düzen</div>
 <div class="ex" style="left:67.3px;top:104.5px"></div>
 <svg class="abs" style="left:91.7px;top:100.5px" width="19" height="16" viewBox="0 0 19 16"><rect x=".7" y=".7" width="17" height="5.800" fill="none" stroke="#2a2a2a" stroke-width="1.300"/><rect x=".7" y="9.200" width="17" height="5.800" fill="none" stroke="#2a2a2a" stroke-width="1.300"/></svg>
 <div class="tr" style="left:114.6px;top:101.6px">Dikey Düzen</div>
 <div class="t" style="left:117.5px;top:119.5px;font-family:'Liberation Serif',serif;font-weight:bold;font-size:22px;line-height:22px;color:#2a2a2a">A</div>
 <div class="tr" style="left:138.5px;top:123.1px">6 numara.</div>
 <div class="ex" style="left:67.3px;top:147.4px"></div>
 <svg class="abs" style="left:92.5px;top:142.1px" width="17" height="19" viewBox="0 0 17 19"><rect x=".7" y=".7" width="5.600" height="16.600" fill="none" stroke="#2a2a2a" stroke-width="1.300"/><rect x="9.700" y=".7" width="5.600" height="16.600" fill="none" stroke="#2a2a2a" stroke-width="1.300"/></svg>
 <div class="tr" style="left:114.6px;top:144.2px">Yatay Düzen</div>
 <svg class="abs" style="left:117.1px;top:165px" width="18" height="15" viewBox="0 0 18 15"><g fill="#2a2a2a"><rect x="6.400" y="0" width="5.200" height="5" rx=".6"/><rect x="0" y="10" width="5.200" height="5" rx=".6"/><rect x="6.400" y="10" width="5.200" height="5" rx=".6"/><rect x="12.800" y="10" width="5.200" height="5" rx=".6"/><path d="M8.300 4.800H9.700V6.800H16.100V10.200H14.700V8.200H9.700V10.200H8.300V8.200H3.300V10.200H1.900V6.800H8.300Z"/></g></svg>
 <div class="tr" style="left:139.1px;top:165.3px">Menü</div>
 <svg class="abs" style="left:116.2px;top:184.9px" width="20" height="18" viewBox="0 0 20 18"><path d="M4.300 8L6.200 2.300Q6.600 1.200 7.800 1.200H12.200Q13.400 1.200 13.800 2.300L15.700 8" fill="none" stroke="#2a2a2a" stroke-width="1.500"/><rect x="7.300" y=".6" width="5.400" height="1.500" fill="#2a2a2a"/><path d="M0 7.700Q0 7 .8 7H19.200Q20 7 20 7.700V9Q20 9.700 19.200 9.700H18.800L17.500 16.800Q17.300 17.700 16.300 17.700H3.700Q2.700 17.700 2.500 16.800L1.200 9.700H.8Q0 9.700 0 9Z" fill="#2a2a2a"/><g fill="#fff"><rect x="4.300" y="10.300" width="1.700" height="5.400"/><rect x="7.600" y="10.300" width="1.700" height="5.400"/><rect x="10.800" y="10.300" width="1.700" height="5.400"/><rect x="14" y="10.300" width="1.700" height="5.400"/></g></svg>
 <div class="tr" id=t7 style="left:139.1px;top:186.4px">Dükkan Sepeti</div>
 <div class="ex" style="left:17.5px;top:211.3px"></div>
 <svg class="abs" style="left:41.6px;top:207.7px" width="19" height="16" viewBox="0 0 19 16"><rect x=".7" y=".7" width="17" height="5.800" fill="none" stroke="#2a2a2a" stroke-width="1.300"/><rect x=".7" y="9.200" width="17" height="5.800" fill="none" stroke="#2a2a2a" stroke-width="1.300"/></svg>
 <div class="tr" style="left:64.4px;top:208.2px;font-weight:bold;color:#222">Body</div>
 <div class="abs" style="left:63.2px;top:225.2px;width:85.700px;height:24.800px;border:1.800px solid #3a78e7"></div>
 <svg class="abs" style="left:66px;top:227.7px" width="20" height="18" viewBox="0 0 20 18"><path d="M4.300 8L6.200 2.300Q6.600 1.200 7.800 1.200H12.200Q13.400 1.200 13.800 2.300L15.700 8" fill="none" stroke="#2a2a2a" stroke-width="1.500"/><rect x="7.300" y=".6" width="5.400" height="1.500" fill="#2a2a2a"/><path d="M0 7.700Q0 7 .8 7H19.200Q20 7 20 7.700V9Q20 9.700 19.200 9.700H18.800L17.500 16.800Q17.300 17.700 16.300 17.700H3.700Q2.700 17.700 2.500 16.800L1.200 9.700H.8Q0 9.700 0 9Z" fill="#2a2a2a"/><g fill="#fff"><rect x="4.300" y="10.300" width="1.700" height="5.400"/><rect x="7.600" y="10.300" width="1.700" height="5.400"/><rect x="10.800" y="10.300" width="1.700" height="5.400"/><rect x="14" y="10.300" width="1.700" height="5.400"/></g></svg>
 <div class="tr" id=t9 style="left:89.7px;top:229.3px">Mağaza</div>
 <div class="ex" style="left:42.3px;top:252.8px"></div>
 <svg class="abs" style="left:67.7px;top:247.7px" width="17" height="19" viewBox="0 0 17 19"><rect x=".7" y=".7" width="5.600" height="16.600" fill="none" stroke="#2a2a2a" stroke-width="1.300"/><rect x="9.700" y=".7" width="5.600" height="16.600" fill="none" stroke="#2a2a2a" stroke-width="1.300"/></svg>
 <div class="tr" style="left:89.3px;top:250.7px">Yatay Düzen</div>

 <!-- divider -->
 <div class="abs" style="left:0;top:271px;width:374px;height:5px;background:#a8a8a8"></div>
 <!-- lower panel -->
 <div class="abs" style="left:355px;top:275px;width:19px;height:436px;background:#fafafa"></div>
 <div class="abs" style="left:358px;top:284px;width:0;height:0;border-left:6.500px solid transparent;border-right:6.500px solid transparent;border-bottom:7px solid #8a8a8a"></div>
 <div class="abs" style="left:359px;top:374px;width:11px;height:60px;border-radius:6px;background:#8b8b8b"></div>
 <div class="abs" style="left:358px;top:700px;width:0;height:0;border-left:6.500px solid transparent;border-right:6.500px solid transparent;border-top:7px solid #8a8a8a"></div>
 <div class="abs" style="left:40px;top:277px;width:14.700px;height:14.700px;border-radius:2.500px;background:#d6d6d6"></div>
 <svg class="abs" style="left:40px;top:277px" width="14.700" height="14.700" viewBox="0 0 14 14"><path d="M3 7.200L5.800 10L11 4" fill="none" stroke="#fff" stroke-width="1.900"/></svg>
 <div class="t" style="left:64px;top:277.700px;font-size:15px;line-height:16px;color:#b3b3b3">Alışveriş Sepeti</div>
 <div class="abs" style="left:0;top:313px;width:355px;height:54px;background:#f8f8f8"></div>
 <div class="abs" style="left:19.300px;top:336px;width:0;height:0;border-left:4.700px solid transparent;border-right:4.700px solid transparent;border-top:5.200px solid #222"></div>
 <div class="t" id="formh" style="left:39px;top:328px;font-size:20px;line-height:22px;color:#222">Form</div>
 <div class="abs" style="left:0;top:368px;width:355px;height:53.700px;background:#e8e8e8"></div>
 <div class="abs" style="left:38.300px;top:391px;width:0;height:0;border-left:4.700px solid transparent;border-right:4.700px solid transparent;border-top:5.200px solid #222"></div>
 <div class="t" id="epostah" style="left:57.500px;top:383px;font-size:20px;line-height:22px;color:#222">Eposta</div>
 <!-- tooltip -->
 <div class="abs" style="left:275px;top:384px;width:99px;height:50px;background:#ff7f16;opacity:.93"></div>
 <div class="abs" style="left:324.800px;top:434px;width:0;height:0;border-left:7px solid transparent;border-right:7px solid transparent;border-top:6.500px solid #ff8119"></div>
 <div class="t" style="left:275px;top:386.500px;width:99px;text-align:center;font-size:15px;line-height:22px;color:#fff;white-space:normal">E-posta<br>yanlış</div>
 <!-- fields -->
 <div class="fl" id="f1" style="left:19px;top:441.500px">Form bu e-posta adresine gönderilecek</div>
 <div class="help" style="left:308.500px;top:440.300px">?</div>
 <div class="abs" style="left:17px;top:463.500px;width:320.500px;height:46px;border:4px solid #fe0000;border-radius:2px;background:#fff"></div>
 <div class="fl" id="f2" style="left:19px;top:522.500px">Form bu epostadan gönderilecek</div>
 <div class="help" style="left:264.500px;top:521.300px">?</div>
 <div class="abs" style="left:17.500px;top:540px;width:318px;height:48px;border:4px solid #fe0000;border-radius:2px;background:#fff"></div>
 <div class="fl" id="f3" style="left:19px;top:600.500px">Konu İle</div>
 <div class="box" style="left:19px;top:620px;width:317px;height:42px"></div>
 <div class="t" style="left:30px;top:633.700px;font-size:15px;line-height:16px;color:#222">Email from the site</div>
 <div class="fl" id="f4" style="left:19px;top:677.800px">Form gönderildi Mesajı</div>
 <div class="box" style="left:19px;top:697px;width:317px;height:42px"></div>
</div>

<!-- red arrows -->
<svg class="abs" style="left:1430px;top:630px" width="130" height="120" viewBox="1430 630 130 120">
 <path d="M1440.500 654.800L1528 651.600" stroke="#f30b12" stroke-width="3.400" stroke-linecap="round" fill="none"/>
 <path d="M1525 644.500L1546 650.600L1525.500 658Z" fill="#f30b12"/>
 <path d="M1451.500 733.800L1528 732.300" stroke="#f30b12" stroke-width="3.400" stroke-linecap="round" fill="none"/>
 <path d="M1525 725.500L1546 731.800L1525.500 739Z" fill="#f30b12"/>
</svg>

</div>
</body>
</html>
